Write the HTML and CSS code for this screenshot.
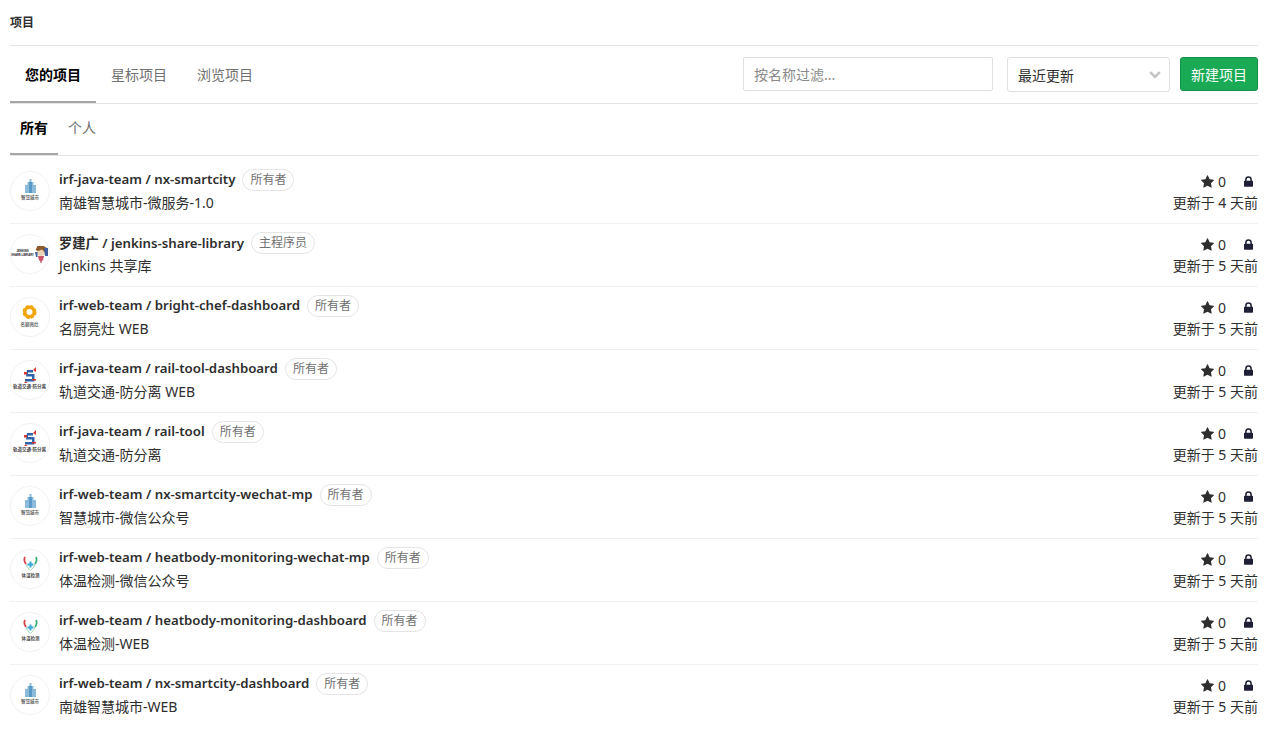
FILE: index.html
```html
<!DOCTYPE html>
<html lang="zh-CN">
<head>
<meta charset="utf-8">
<title>项目</title>
<link rel="stylesheet" href="styles.css">
</head>
<body>
<main class="page">
  <h1 class="crumb">项目</h1>

  <div class="toolbar">
    <nav class="tabs">
      <a class="tab tab-main active">您的项目</a>
      <a class="tab tab-main">星标项目</a>
      <a class="tab tab-main">浏览项目</a>
    </nav>
    <div class="controls">
      <input class="filter" type="text" placeholder="按名称过滤...">
      <div class="select">
        <span>最近更新</span>
        <svg class="chevron" viewBox="0 0 12 8" width="12" height="8"><path d="M1.200 1.200L6 6l4.800-4.800" fill="none" stroke="#c4c4c4" stroke-width="2.600"/></svg>
      </div>
      <button class="new-btn" type="button">新建项目</button>
    </div>
  </div>

  <nav class="tabs subtabs">
    <a class="tab tab-sub active">所有</a>
    <a class="tab tab-sub">个人</a>
  </nav>

  <ul class="projects">
    <li class="project">
      <svg class="avatar" viewBox="0 0 38 38"><path d="M14 21v-8h2.500V10h2V7h2v3h2v3H25v8z" fill="#8dbbdc"/><path d="M18 21V10h3v11z" fill="#5a9ac8"/><text class="logo-text" x="19" y="27" text-anchor="middle" fill="#666">智慧城市</text></svg>
      <div class="info">
        <div class="title"><a class="name">irf-java-team / nx-smartcity</a><span class="role">所有者</span></div>
        <div class="desc">南雄智慧城市-微服务-1.0</div>
      </div>
      <div class="meta">
        <div class="stats"><svg class="star" viewBox="0 0 1664 1600"><path d="M1664 615q0 22-26 48l-363 354 86 500q1 7 1 20 0 21-10.500 35.500T1321 1587q-19 0-40-12l-449-236-449 236q-22 12-40 12-21 0-31.500-14.500T301 1537q0-6 2-20l86-500L25 663Q0 636 0 615q0-37 56-46l502-73L783 41q19-41 49-41t49 41l225 455 502 73q56 9 56 46z"/></svg><span class="count">0</span><svg class="lock" viewBox="0 0 12 14"><path d="M1.500 6V4.500a4.500 4.500 0 0 1 9 0V6h.5a1 1 0 0 1 1 1v6a1 1 0 0 1-1 1H1a1 1 0 0 1-1-1V7a1 1 0 0 1 1-1zM3.500 6h5V4.500a2.500 2.500 0 0 0-5 0z"/></svg></div>
        <div class="updated">更新于 4 天前</div>
      </div>
    </li>
    <li class="project">
      <svg class="avatar" viewBox="0 0 38 38"><text class="logo-tiny" x="11.500" y="17" text-anchor="middle" fill="#222">JENKINS</text><text class="logo-tiny" x="11.500" y="20.500" text-anchor="middle" fill="#222">SHARE LIBRARY</text><circle cx="30" cy="17" r="4" fill="#ecd2b2"/><path d="M24.500 15l2-4h6l3.500 2 1 4-3 .5-3-3-4 1.500z" fill="#8a5a2b"/><path d="M33 13h4v8h-3zM24 17h2.500v5H25z" fill="#3f5f9f"/><path d="M27 21h6l-1 4.500h-1l-.5 2.500h-1l-.5-2.500h-1z" fill="#c9566b"/></svg>
      <div class="info">
        <div class="title"><a class="name">罗建广 / jenkins-share-library</a><span class="role">主程序员</span></div>
        <div class="desc">Jenkins 共享库</div>
      </div>
      <div class="meta">
        <div class="stats"><svg class="star" viewBox="0 0 1664 1600"><path d="M1664 615q0 22-26 48l-363 354 86 500q1 7 1 20 0 21-10.500 35.500T1321 1587q-19 0-40-12l-449-236-449 236q-22 12-40 12-21 0-31.500-14.500T301 1537q0-6 2-20l86-500L25 663Q0 636 0 615q0-37 56-46l502-73L783 41q19-41 49-41t49 41l225 455 502 73q56 9 56 46z"/></svg><span class="count">0</span><svg class="lock" viewBox="0 0 12 14"><path d="M1.500 6V4.500a4.500 4.500 0 0 1 9 0V6h.5a1 1 0 0 1 1 1v6a1 1 0 0 1-1 1H1a1 1 0 0 1-1-1V7a1 1 0 0 1 1-1zM3.500 6h5V4.500a2.500 2.500 0 0 0-5 0z"/></svg></div>
        <div class="updated">更新于 5 天前</div>
      </div>
    </li>
    <li class="project">
      <svg class="avatar" viewBox="0 0 38 38"><circle cx="18.500" cy="14" r="4.700" fill="none" stroke="#f2a50c" stroke-width="3.400"/><circle cx="18.500" cy="14" r="6.300" fill="none" stroke="#f2a50c" stroke-width="1.400" stroke-dasharray="3 2"/><text class="logo-text" x="18.500" y="27.500" text-anchor="middle" fill="#666">名厨亮灶</text></svg>
      <div class="info">
        <div class="title"><a class="name">irf-web-team / bright-chef-dashboard</a><span class="role">所有者</span></div>
        <div class="desc">名厨亮灶 WEB</div>
      </div>
      <div class="meta">
        <div class="stats"><svg class="star" viewBox="0 0 1664 1600"><path d="M1664 615q0 22-26 48l-363 354 86 500q1 7 1 20 0 21-10.500 35.500T1321 1587q-19 0-40-12l-449-236-449 236q-22 12-40 12-21 0-31.500-14.500T301 1537q0-6 2-20l86-500L25 663Q0 636 0 615q0-37 56-46l502-73L783 41q19-41 49-41t49 41l225 455 502 73q56 9 56 46z"/></svg><span class="count">0</span><svg class="lock" viewBox="0 0 12 14"><path d="M1.500 6V4.500a4.500 4.500 0 0 1 9 0V6h.5a1 1 0 0 1 1 1v6a1 1 0 0 1-1 1H1a1 1 0 0 1-1-1V7a1 1 0 0 1 1-1zM3.500 6h5V4.500a2.500 2.500 0 0 0-5 0z"/></svg></div>
        <div class="updated">更新于 5 天前</div>
      </div>
    </li>
    <li class="project">
      <svg class="avatar" viewBox="0 0 38 38"><path d="M16 9h6v2.500h-5V13h6.500v7.500H14V18h7v-2.500h-6z" fill="#2f62a8"/><path d="M22 9l3-3v5zM14.500 20.500l2.500 1.500h-4z" fill="#d8372f"/><path d="M13 11h3v2.500h-3zM21 18h4v1.500h-4z" fill="#d8372f"/><text class="logo-text" x="18.500" y="27" text-anchor="middle" fill="#444">轨道交通-防分离</text></svg>
      <div class="info">
        <div class="title"><a class="name">irf-java-team / rail-tool-dashboard</a><span class="role">所有者</span></div>
        <div class="desc">轨道交通-防分离 WEB</div>
      </div>
      <div class="meta">
        <div class="stats"><svg class="star" viewBox="0 0 1664 1600"><path d="M1664 615q0 22-26 48l-363 354 86 500q1 7 1 20 0 21-10.500 35.500T1321 1587q-19 0-40-12l-449-236-449 236q-22 12-40 12-21 0-31.500-14.500T301 1537q0-6 2-20l86-500L25 663Q0 636 0 615q0-37 56-46l502-73L783 41q19-41 49-41t49 41l225 455 502 73q56 9 56 46z"/></svg><span class="count">0</span><svg class="lock" viewBox="0 0 12 14"><path d="M1.500 6V4.500a4.500 4.500 0 0 1 9 0V6h.5a1 1 0 0 1 1 1v6a1 1 0 0 1-1 1H1a1 1 0 0 1-1-1V7a1 1 0 0 1 1-1zM3.500 6h5V4.500a2.500 2.500 0 0 0-5 0z"/></svg></div>
        <div class="updated">更新于 5 天前</div>
      </div>
    </li>
    <li class="project">
      <svg class="avatar" viewBox="0 0 38 38"><path d="M16 9h6v2.500h-5V13h6.500v7.500H14V18h7v-2.500h-6z" fill="#2f62a8"/><path d="M22 9l3-3v5zM14.500 20.500l2.500 1.500h-4z" fill="#d8372f"/><path d="M13 11h3v2.500h-3zM21 18h4v1.500h-4z" fill="#d8372f"/><text class="logo-text" x="18.500" y="27" text-anchor="middle" fill="#444">轨道交通-防分离</text></svg>
      <div class="info">
        <div class="title"><a class="name">irf-java-team / rail-tool</a><span class="role">所有者</span></div>
        <div class="desc">轨道交通-防分离</div>
      </div>
      <div class="meta">
        <div class="stats"><svg class="star" viewBox="0 0 1664 1600"><path d="M1664 615q0 22-26 48l-363 354 86 500q1 7 1 20 0 21-10.500 35.500T1321 1587q-19 0-40-12l-449-236-449 236q-22 12-40 12-21 0-31.500-14.500T301 1537q0-6 2-20l86-500L25 663Q0 636 0 615q0-37 56-46l502-73L783 41q19-41 49-41t49 41l225 455 502 73q56 9 56 46z"/></svg><span class="count">0</span><svg class="lock" viewBox="0 0 12 14"><path d="M1.500 6V4.500a4.500 4.500 0 0 1 9 0V6h.5a1 1 0 0 1 1 1v6a1 1 0 0 1-1 1H1a1 1 0 0 1-1-1V7a1 1 0 0 1 1-1zM3.500 6h5V4.500a2.500 2.500 0 0 0-5 0z"/></svg></div>
        <div class="updated">更新于 5 天前</div>
      </div>
    </li>
    <li class="project">
      <svg class="avatar" viewBox="0 0 38 38"><path d="M14 21v-8h2.500V10h2V7h2v3h2v3H25v8z" fill="#8dbbdc"/><path d="M18 21V10h3v11z" fill="#5a9ac8"/><text class="logo-text" x="19" y="27" text-anchor="middle" fill="#666">智慧城市</text></svg>
      <div class="info">
        <div class="title"><a class="name">irf-web-team / nx-smartcity-wechat-mp</a><span class="role">所有者</span></div>
        <div class="desc">智慧城市-微信公众号</div>
      </div>
      <div class="meta">
        <div class="stats"><svg class="star" viewBox="0 0 1664 1600"><path d="M1664 615q0 22-26 48l-363 354 86 500q1 7 1 20 0 21-10.500 35.500T1321 1587q-19 0-40-12l-449-236-449 236q-22 12-40 12-21 0-31.500-14.500T301 1537q0-6 2-20l86-500L25 663Q0 636 0 615q0-37 56-46l502-73L783 41q19-41 49-41t49 41l225 455 502 73q56 9 56 46z"/></svg><span class="count">0</span><svg class="lock" viewBox="0 0 12 14"><path d="M1.500 6V4.500a4.500 4.500 0 0 1 9 0V6h.5a1 1 0 0 1 1 1v6a1 1 0 0 1-1 1H1a1 1 0 0 1-1-1V7a1 1 0 0 1 1-1zM3.500 6h5V4.500a2.500 2.500 0 0 0-5 0z"/></svg></div>
        <div class="updated">更新于 5 天前</div>
      </div>
    </li>
    <li class="project">
      <svg class="avatar" viewBox="0 0 38 38"><path d="M14 7c-1.500 3-.5 5 1 7" fill="none" stroke="#d8434b" stroke-width="1.800"/><path d="M25 7c1.500 3 .5 5-1 7" fill="none" stroke="#3cae7a" stroke-width="1.800"/><path d="M15 14c1 3 3 5 4.500 6.500 1.500-1.500 3.500-3.500 4.500-6.500" fill="none" stroke="#9ccfb6" stroke-width="1"/><path d="M18.500 11.500h2v2h2v2h-2v2h-2v-2h-2v-2h2z" fill="#39a6d8"/><text class="logo-text" x="19.500" y="27" text-anchor="middle" fill="#555">体温检测</text></svg>
      <div class="info">
        <div class="title"><a class="name">irf-web-team / heatbody-monitoring-wechat-mp</a><span class="role">所有者</span></div>
        <div class="desc">体温检测-微信公众号</div>
      </div>
      <div class="meta">
        <div class="stats"><svg class="star" viewBox="0 0 1664 1600"><path d="M1664 615q0 22-26 48l-363 354 86 500q1 7 1 20 0 21-10.500 35.500T1321 1587q-19 0-40-12l-449-236-449 236q-22 12-40 12-21 0-31.500-14.500T301 1537q0-6 2-20l86-500L25 663Q0 636 0 615q0-37 56-46l502-73L783 41q19-41 49-41t49 41l225 455 502 73q56 9 56 46z"/></svg><span class="count">0</span><svg class="lock" viewBox="0 0 12 14"><path d="M1.500 6V4.500a4.500 4.500 0 0 1 9 0V6h.5a1 1 0 0 1 1 1v6a1 1 0 0 1-1 1H1a1 1 0 0 1-1-1V7a1 1 0 0 1 1-1zM3.500 6h5V4.500a2.500 2.500 0 0 0-5 0z"/></svg></div>
        <div class="updated">更新于 5 天前</div>
      </div>
    </li>
    <li class="project">
      <svg class="avatar" viewBox="0 0 38 38"><path d="M14 7c-1.500 3-.5 5 1 7" fill="none" stroke="#d8434b" stroke-width="1.800"/><path d="M25 7c1.500 3 .5 5-1 7" fill="none" stroke="#3cae7a" stroke-width="1.800"/><path d="M15 14c1 3 3 5 4.500 6.500 1.500-1.500 3.500-3.500 4.500-6.500" fill="none" stroke="#9ccfb6" stroke-width="1"/><path d="M18.500 11.500h2v2h2v2h-2v2h-2v-2h-2v-2h2z" fill="#39a6d8"/><text class="logo-text" x="19.500" y="27" text-anchor="middle" fill="#555">体温检测</text></svg>
      <div class="info">
        <div class="title"><a class="name">irf-web-team / heatbody-monitoring-dashboard</a><span class="role">所有者</span></div>
        <div class="desc">体温检测-WEB</div>
      </div>
      <div class="meta">
        <div class="stats"><svg class="star" viewBox="0 0 1664 1600"><path d="M1664 615q0 22-26 48l-363 354 86 500q1 7 1 20 0 21-10.500 35.500T1321 1587q-19 0-40-12l-449-236-449 236q-22 12-40 12-21 0-31.500-14.500T301 1537q0-6 2-20l86-500L25 663Q0 636 0 615q0-37 56-46l502-73L783 41q19-41 49-41t49 41l225 455 502 73q56 9 56 46z"/></svg><span class="count">0</span><svg class="lock" viewBox="0 0 12 14"><path d="M1.500 6V4.500a4.500 4.500 0 0 1 9 0V6h.5a1 1 0 0 1 1 1v6a1 1 0 0 1-1 1H1a1 1 0 0 1-1-1V7a1 1 0 0 1 1-1zM3.500 6h5V4.500a2.500 2.500 0 0 0-5 0z"/></svg></div>
        <div class="updated">更新于 5 天前</div>
      </div>
    </li>
    <li class="project">
      <svg class="avatar" viewBox="0 0 38 38"><path d="M14 21v-8h2.500V10h2V7h2v3h2v3H25v8z" fill="#8dbbdc"/><path d="M18 21V10h3v11z" fill="#5a9ac8"/><text class="logo-text" x="19" y="27" text-anchor="middle" fill="#666">智慧城市</text></svg>
      <div class="info">
        <div class="title"><a class="name">irf-web-team / nx-smartcity-dashboard</a><span class="role">所有者</span></div>
        <div class="desc">南雄智慧城市-WEB</div>
      </div>
      <div class="meta">
        <div class="stats"><svg class="star" viewBox="0 0 1664 1600"><path d="M1664 615q0 22-26 48l-363 354 86 500q1 7 1 20 0 21-10.500 35.500T1321 1587q-19 0-40-12l-449-236-449 236q-22 12-40 12-21 0-31.500-14.500T301 1537q0-6 2-20l86-500L25 663Q0 636 0 615q0-37 56-46l502-73L783 41q19-41 49-41t49 41l225 455 502 73q56 9 56 46z"/></svg><span class="count">0</span><svg class="lock" viewBox="0 0 12 14"><path d="M1.500 6V4.500a4.500 4.500 0 0 1 9 0V6h.5a1 1 0 0 1 1 1v6a1 1 0 0 1-1 1H1a1 1 0 0 1-1-1V7a1 1 0 0 1 1-1zM3.500 6h5V4.500a2.500 2.500 0 0 0-5 0z"/></svg></div>
        <div class="updated">更新于 5 天前</div>
      </div>
    </li>
  </ul>
</main>
</body>
</html>
```
FILE: styles.css
```css
* { box-sizing: border-box; }
html, body { margin: 0; padding: 0; background: #fff; }
body {
  font-family: "Noto Sans", "Noto Sans CJK SC", sans-serif;
  font-size: 14px;
  color: #2e2e2e;
  height: 742px;
  overflow: hidden;
}
.logo-text {
  font-family: "Noto Sans CJK SC", sans-serif;
  font-size: 4.5px;
  font-weight: 700;
}
.logo-tiny {
  font-family: "Liberation Sans", sans-serif;
  font-size: 2.8px;
  font-weight: 700;
}
.page { margin: 0 15px 0 10px; }
.crumb {
  margin: 0;
  height: 46px;
  font-size: 12px;
  font-weight: 700;
  line-height: 45px;
  color: #2e2e2e;
  border-bottom: 1px solid #e5e5e5;
}
.toolbar {
  display: flex;
  justify-content: space-between;
  height: 58px;
  border-bottom: 1px solid #e5e5e5;
}
.tabs { display: flex; }
.tab {
  display: block;
  color: #707070;
  border-bottom: 2px solid transparent;
}
.tab.active {
  color: #000;
  font-weight: 700;
  border-bottom-color: #a6a6a6;
}
.tab-main { padding: 0 15px; line-height: 58px; height: 57px; }
.controls { display: flex; align-items: flex-start; padding-top: 11px; }
.filter {
  width: 250px;
  height: 34px;
  padding: 0 10px;
  border: 1px solid #dfdfdf;
  border-radius: 2px;
  font: inherit;
  color: #2e2e2e;
  outline: none;
}
.filter::placeholder { color: #8a8a8a; opacity: 1; }
.select {
  display: flex;
  align-items: center;
  justify-content: space-between;
  width: 163px;
  height: 35px;
  margin-left: 14px;
  padding: 0 8px 0 10px;
  border: 1px solid #dfdfdf;
  border-radius: 3px;
}
.new-btn {
  width: 78px;
  height: 34px;
  margin-left: 10px;
  padding: 0;
  font: inherit;
  color: #fff;
  background: #1aaa55;
  border: 1px solid #168f48;
  border-radius: 3px;
}
.subtabs { height: 52px; border-bottom: 1px solid #e5e5e5; }
.tab-sub { padding: 0 10px; line-height: 48px; height: 51px; }
.projects { list-style: none; margin: 0; padding: 0; }
.project {
  display: flex;
  align-items: flex-start;
  height: 63px;
  padding-top: 6px;
  border-bottom: 1px solid #f0f0f0;
}
.project:first-child { height: 68px; padding-top: 11px; }
.project:last-child { border-bottom: 0; }
.avatar {
  flex: none;
  width: 40px;
  height: 40px;
  margin: 4px 9px 0 0;
  border: 1px solid #f2f2f2;
  border-radius: 50%;
}
.info { flex: 1; min-width: 0; }
.title { display: flex; align-items: center; height: 24px; }
.name { font-size: 13.25px; font-weight: 600; color: #2e2e2e; }
.role {
  margin: 2px 0 0 7px;
  padding: 0 7px;
  height: 22px;
  line-height: 20px;
  font-size: 12px;
  color: #707070;
  border: 1px solid #e5e5e5;
  border-radius: 11px;
}
.desc { height: 24px; line-height: 24px; }
.meta { text-align: right; }
.stats { display: flex; align-items: center; justify-content: flex-end; height: 24px; padding-top: 5px; }
.star { width: 13px; height: 13px; fill: #2e2e2e; }
.count { margin-left: 4px; width: 8px; text-align: left; }
.lock { width: 9px; height: 11px; margin-left: 18px; margin-right: 5px; fill: #1f1f35; }
.updated { height: 24px; line-height: 24px; }
```
